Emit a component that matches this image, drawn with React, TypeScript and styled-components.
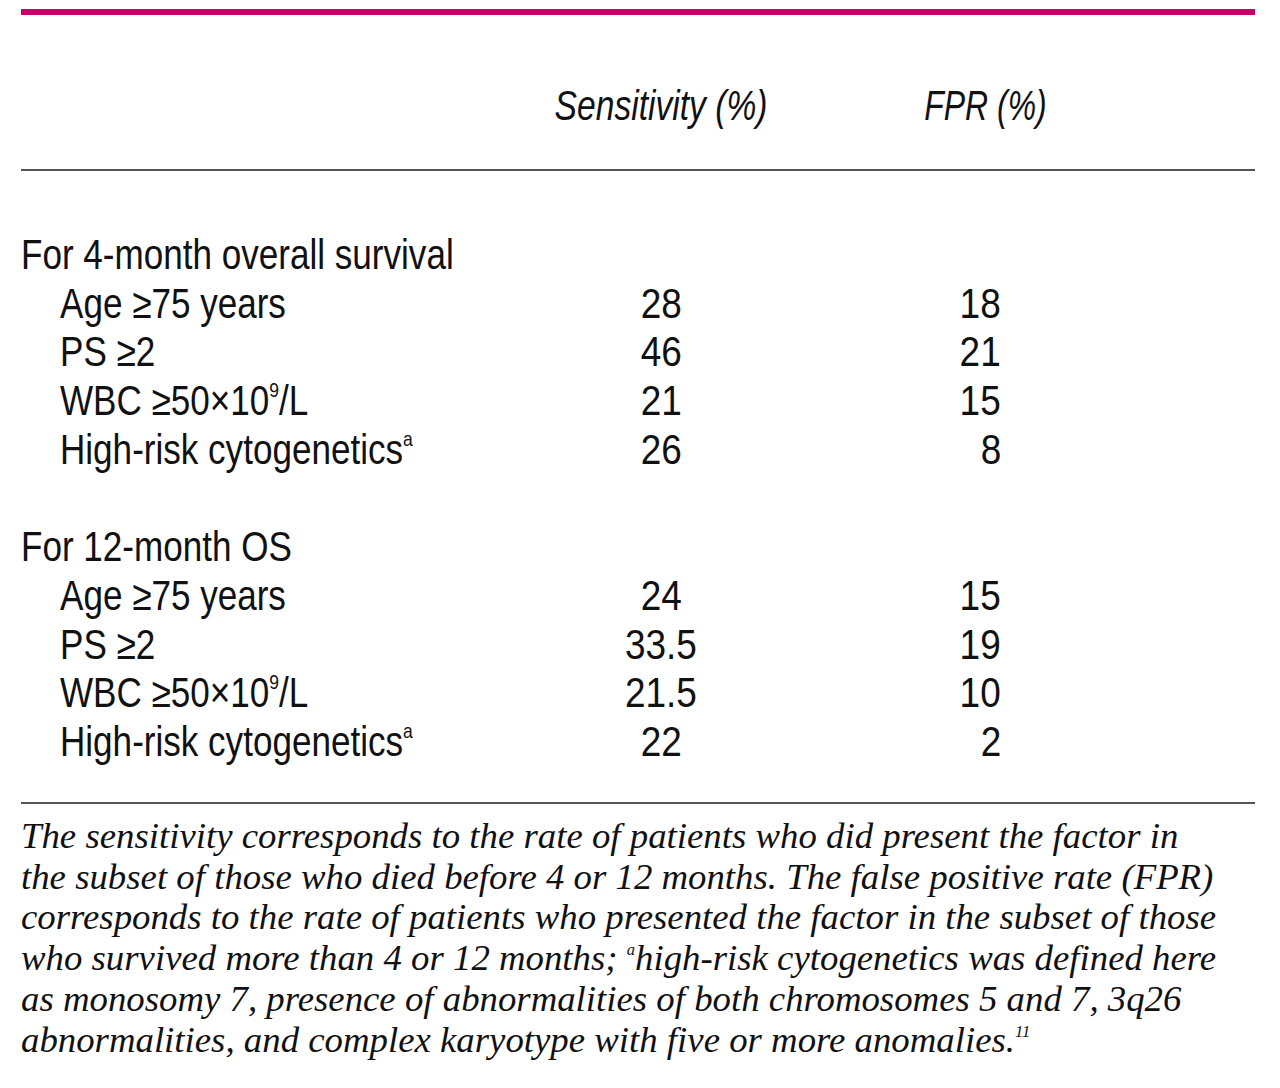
import React from "react";
import styled, { createGlobalStyle } from "styled-components";

const Global = createGlobalStyle`
  html, body { margin: 0; padding: 0; background: #ffffff; }
  body { color: #111111; }
`;

const Page = styled.div`
  width: 1234px;
  margin-left: 21px;
  padding-top: 9px;
`;

const TopRule = styled.div`
  height: 6px;
  background: #c8006a;
`;

const Rule = styled.div`
  height: 2px;
  background: #555555;
`;

const Table = styled.div`
  display: grid;
  grid-template-columns: 534px 212px 158px 120px 1fr;
  font-family: "Liberation Sans", Arial, sans-serif;
  font-size: 42px;
  line-height: 48.7px;
  color: #111111;
`;

const HeaderRow = styled(Table)`
  height: 154px;
  align-items: end;
  padding-bottom: 38px;
  box-sizing: border-box;
  font-style: italic;
`;

const Body = styled(Table)`
  padding-top: 60px;
  padding-bottom: 35px;
`;

type Align = "left" | "center" | "right";

const justify = { left: "flex-start", center: "center", right: "flex-end" } as const;

const Cell = styled.div<{ $align?: Align; $indent?: boolean; $pr?: number }>`
  display: flex;
  justify-content: ${(p) => justify[p.$align ?? "left"]};
  padding-left: ${(p) => (p.$indent ? "39px" : "0")};
  padding-right: ${(p) => (p.$pr ? `${p.$pr}px` : "0")};
  white-space: nowrap;
  min-width: 0;
`;

/* condensed face: the narrow grotesque of the original is drawn by squeezing Liberation Sans */
const Narrow = styled.span<{ $origin?: Align; $squeeze?: number }>`
  display: inline-block;
  flex-shrink: 0;
  transform: scaleX(${(p) => p.$squeeze ?? 0.835});
  transform-origin: ${(p) => p.$origin ?? "left"} center;
`;

const Filler = styled.div``;

const Sup = styled.sup`
  font-size: 0.5em;
  line-height: 0;
  vertical-align: 0.85em;
`;

const Notes = styled.div`
  padding-top: 12px;
  font-family: "Liberation Serif", "Times New Roman", serif;
  font-style: italic;
  font-size: 36.8px;
  line-height: 40.8px;
  color: #111111;
`;

const NoteLine = styled.div`
  white-space: nowrap;
`;

const NoteSup = styled.sup`
  font-size: 0.45em;
  line-height: 0;
  vertical-align: 0.9em;
`;

type Row = { label: React.ReactNode; sens: string; fpr: string };

const rows4: Row[] = [
  { label: <>Age ≥75 years</>, sens: "28", fpr: "18" },
  { label: <>PS ≥2</>, sens: "46", fpr: "21" },
  { label: <>WBC ≥50×10<Sup>9</Sup>/L</>, sens: "21", fpr: "15" },
  { label: <>High-risk cytogenetics<Sup>a</Sup></>, sens: "26", fpr: "8" },
];

const rows12: Row[] = [
  { label: <>Age ≥75 years</>, sens: "24", fpr: "15" },
  { label: <>PS ≥2</>, sens: "33.5", fpr: "19" },
  { label: <>WBC ≥50×10<Sup>9</Sup>/L</>, sens: "21.5", fpr: "10" },
  { label: <>High-risk cytogenetics<Sup>a</Sup></>, sens: "22", fpr: "2" },
];

function DataRows({ rows }: { rows: Row[] }) {
  return (
    <>
      {rows.map((r, i) => (
        <React.Fragment key={i}>
          <Cell $indent>
            <Narrow>{r.label}</Narrow>
          </Cell>
          <Cell $align="center">
            <Narrow $origin="center" $squeeze={0.88}>{r.sens}</Narrow>
          </Cell>
          <Filler />
          <Cell $align="right" $pr={44}>
            <Narrow $origin="right" $squeeze={0.88}>{r.fpr}</Narrow>
          </Cell>
          <Filler />
        </React.Fragment>
      ))}
    </>
  );
}

function Section({ title }: { title: string }) {
  return (
    <>
      <Cell>
        <Narrow>{title}</Narrow>
      </Cell>
      <Filler />
      <Filler />
      <Filler />
      <Filler />
    </>
  );
}

function Blank() {
  return (
    <>
      <Cell>&nbsp;</Cell>
      <Filler />
      <Filler />
      <Filler />
      <Filler />
    </>
  );
}

export default function App() {
  return (
    <Page>
      <Global />
      <TopRule />
      <HeaderRow>
        <Filler />
        <Cell $align="center">
          <Narrow $origin="center" $squeeze={0.8}>Sensitivity (%)</Narrow>
        </Cell>
        <Filler />
        <Cell $align="center">
          <Narrow $origin="center" $squeeze={0.76}>FPR (%)</Narrow>
        </Cell>
        <Filler />
      </HeaderRow>
      <Rule />
      <Body>
        <Section title="For 4-month overall survival" />
        <DataRows rows={rows4} />
        <Blank />
        <Section title="For 12-month OS" />
        <DataRows rows={rows12} />
      </Body>
      <Rule />
      <Notes>
        <NoteLine>The sensitivity corresponds to the rate of patients who did present the factor in</NoteLine>
        <NoteLine>the subset of those who died before 4 or 12 months. The false positive rate (FPR)</NoteLine>
        <NoteLine>corresponds to the rate of patients who presented the factor in the subset of those</NoteLine>
        <NoteLine>who survived more than 4 or 12 months; <NoteSup>a</NoteSup>high-risk cytogenetics was defined here</NoteLine>
        <NoteLine>as monosomy 7, presence of abnormalities of both chromosomes 5 and 7, 3q26</NoteLine>
        <NoteLine>abnormalities, and complex karyotype with five or more anomalies.<NoteSup>11</NoteSup></NoteLine>
      </Notes>
    </Page>
  );
}
